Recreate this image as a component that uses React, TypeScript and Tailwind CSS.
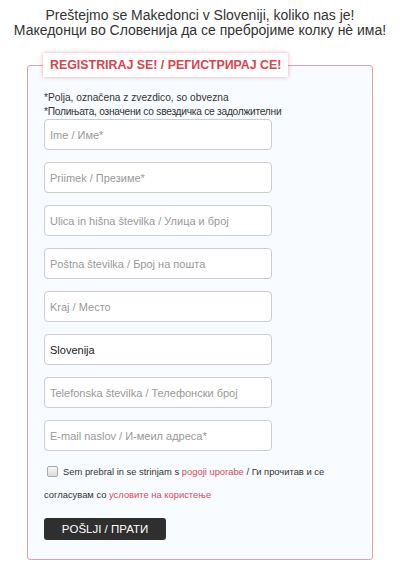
export default function App() {
  const fields: { ph: string; value?: string }[] = [
    { ph: "Ime / Име*" },
    { ph: "Priimek / Презиме*" },
    { ph: "Ulica in hišna številka / Улица и број" },
    { ph: "Poštna številka / Број на пошта" },
    { ph: "Kraj / Место" },
    { ph: "Država", value: "Slovenija" },
    { ph: "Telefonska številka / Телефонски број" },
    { ph: "E-mail naslov / И-меил адреса*" },
  ];

  return (
    <div className="min-h-[577px] w-[400px] bg-white font-['Liberation_Sans',Arial,sans-serif] text-[#333]">
      <div className="pt-[8px] text-center text-[14px] leading-[15px]">
        <p>Preštejmo se Makedonci v Sloveniji, koliko nas je!</p>
        <p>Македонци во Словенија да се пребројиме колку нè има!</p>
      </div>

      <fieldset className="mx-[27px] mt-[15px] rounded-[3px] border border-[#e3a3a6] bg-[#f8fbff] px-[16px] pb-[19px]">
        <legend className="ml-[-1px] h-[24px] bg-white px-[7px] text-[12.4px] font-bold leading-[24px] text-[#d9434e] shadow-[0_0_4px_rgba(217,67,78,0.45)]">
          REGISTRIRAJ SE! / РЕГИСТРИРАЈ СЕ!
        </legend>

        <div className="pt-[14px] text-[10.2px] leading-[14px]">
          <p>*Polja, označena z zvezdico, so obvezna</p>
          <p className="tracking-[-0.25px]">*Полињата, означени со ѕвездичка се задолжителни</p>
        </div>

        <div className="flex flex-col gap-[12px]">
          {fields.map((f) => (
            <input
              key={f.ph}
              type="text"
              placeholder={f.ph}
              defaultValue={f.value}
              className="h-[31px] w-[228px] rounded-[4px] border border-[#ccc] bg-white px-[5px] text-[11px] text-[#222] placeholder:text-[#999] outline-none"
            />
          ))}
        </div>

        <p className="mt-[9px] text-[9.4px] leading-[23px]">
          <input
            type="checkbox"
            className="relative top-[-1px] ml-[3px] mr-[5px] h-[11px] w-[11px] appearance-none rounded-[2px] border border-[#a9a9a9] bg-gradient-to-b from-[#f6f6f6] to-[#dcdcdc] align-middle"
          />
          Sem prebral in se strinjam s{" "}
          <a className="text-[#dd4a55]">pogoji uporabe</a> / Ги прочитав и се
          <br />
          согласувам со <a className="text-[#dd4a55]">условите на користење</a>
        </p>

        <button className="mt-[12px] h-[22px] w-[122px] rounded-[3px] bg-[#2f2f2f] text-[11.5px] leading-[22px] text-white">
          POŠLJI / ПРАТИ
        </button>
      </fieldset>
    </div>
  );
}
